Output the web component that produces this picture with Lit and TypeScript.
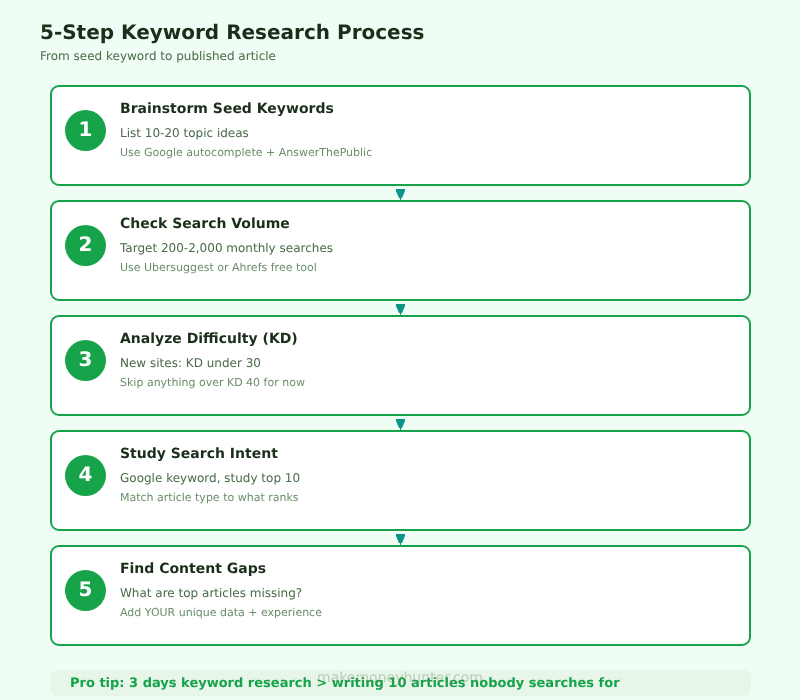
import { LitElement, html, css } from "lit";
import { customElement } from "lit/decorators.js";

const steps = [
  ["Brainstorm Seed Keywords", "List 10-20 topic ideas", "Use Google autocomplete + AnswerThePublic"],
  ["Check Search Volume", "Target 200-2,000 monthly searches", "Use Ubersuggest or Ahrefs free tool"],
  ["Analyze Difficulty (KD)", "New sites: KD under 30", "Skip anything over KD 40 for now"],
  ["Study Search Intent", "Google keyword, study top 10", "Match article type to what ranks"],
  ["Find Content Gaps", "What are top articles missing?", "Add YOUR unique data + experience"],
];

@customElement("app-root")
export class AppRoot extends LitElement {
  static styles = css`
    :host {
      display: block;
      width: 800px;
      height: 700px;
      position: relative;
      overflow: hidden;
      background: #f0fdf4;
      font-family: "DejaVu Sans", sans-serif;
      text-rendering: geometricPrecision;
    }
    .page {
      display: flex;
      flex-direction: column;
      padding: 18px 49px 0 50px;
      will-change: transform;
    }
    .head { margin-left: -10px; }
    h1 {
      margin: 0;
      font-size: 20px;
      line-height: 28px;
      font-weight: 700;
      color: #1a2e1a;
    }
    .sub {
      font-size: 12px;
      line-height: 16px;
      margin-top: 2px;
      color: #4a6b4a;
    }
    .steps {
      margin-top: 21px;
      display: flex;
      flex-direction: column;
    }
    .card {
      box-sizing: border-box;
      height: 101px;
      border: 2px solid #16a34a;
      border-radius: 9px;
      background: #fff;
      display: flex;
      align-items: flex-start;
      gap: 14px;
      padding: 23px 13px 0;
    }
    .num {
      flex: none;
      box-sizing: border-box;
      width: 41px;
      height: 41px;
      padding-bottom: 3px;
      border-radius: 50%;
      background: #16a34a;
      color: #fff;
      font-weight: 700;
      font-size: 20px;
      display: flex;
      align-items: center;
      justify-content: center;
    }
    .text { display: flex; flex-direction: column; margin-top: -10px; }
    .t {
      font-size: 14px;
      line-height: 18px;
      font-weight: 700;
      color: #1a2e1a;
    }
    .d {
      margin-top: 7px;
      font-size: 12px;
      line-height: 16px;
      color: #4a6b4a;
    }
    .n {
      margin-top: 5px;
      font-size: 11px;
      line-height: 14px;
      color: #6b8f6b;
    }
    .conn {
      height: 14px;
      display: flex;
      justify-content: center;
    }
    .conn svg { display: block; }
    .tip {
      box-sizing: border-box;
      margin-top: 24px;
      height: 26px;
      border-radius: 8px;
      background: #e8f5e9;
      display: flex;
      align-items: center;
      padding: 0 20px;
      font-size: 13px;
      font-weight: 700;
      color: #16a34a;
    }
    .mark {
      position: absolute;
      left: 0;
      right: 0;
      top: 670px;
      text-align: center;
      font-size: 14px;
      line-height: 16px;
      color: rgba(100, 130, 100, 0.35);
      will-change: transform;
    }
  `;

  render() {
    return html`
      <div class="page">
        <div class="head">
          <h1>5-Step Keyword Research Process</h1>
          <div class="sub">From seed keyword to published article</div>
        </div>
        <div class="steps">
          ${steps.map(
            (s, i) => html`
              ${i > 0
                ? html`<div class="conn">
                    <svg width="12" height="14" viewBox="0 0 12 14">
                      <path d="M1 3H10V5L7 12H6V14H5V12H4L1 5Z" fill="#0d9488" />
                    </svg>
                  </div>`
                : ""}
              <div class="card">
                <div class="num">${i + 1}</div>
                <div class="text">
                  <div class="t">${s[0]}</div>
                  <div class="d">${s[1]}</div>
                  <div class="n">${s[2]}</div>
                </div>
              </div>
            `
          )}
        </div>
        <div class="tip">Pro tip: 3 days keyword research &gt; writing 10 articles nobody searches for</div>
      </div>
      <div class="mark">makemoneyhunter.com</div>
    `;
  }
}
